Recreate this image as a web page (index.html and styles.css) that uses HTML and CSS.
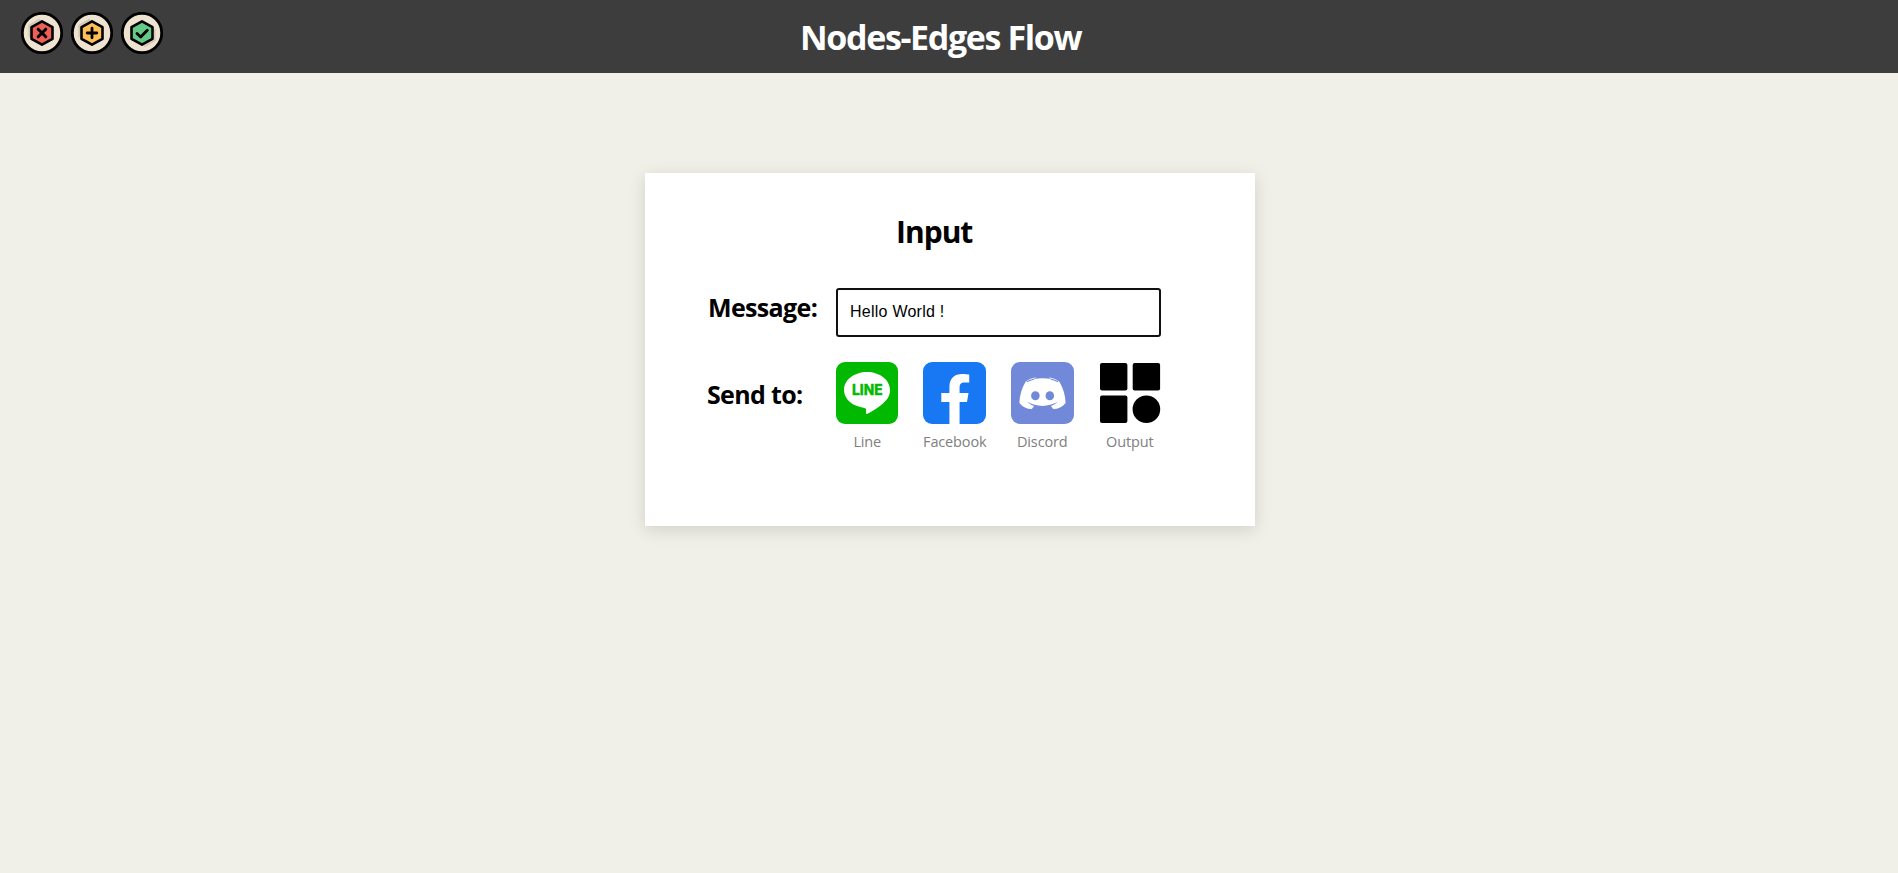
FILE: index.html
```html
<!DOCTYPE html>
<html lang="en">
<head>
<meta charset="utf-8">
<title>Nodes-Edges Flow</title>
<link rel="stylesheet" href="styles.css">
</head>
<body>
<header class="topbar">
  <div class="actions">
    <svg class="action" viewBox="0 0 42 42">
      <circle cx="21" cy="21" r="19.7" fill="#ede3d0" stroke="#000" stroke-width="2.8"/>
      <path d="M8.3 25V13.5L19 7.3" fill="none" stroke="#d5c9b4" stroke-width="2"/>
      <path d="M21 9.3L31.5 15.2V26.8L21 32.7L10.5 26.8V15.2Z" fill="#ee5f55" stroke="#000" stroke-width="2.6" stroke-linejoin="round"/>
      <path d="M17.200 17.200L24.800 24.800M24.800 17.200L17.200 24.800" stroke="#000" stroke-width="3" stroke-linecap="round"/>
    </svg>
    <svg class="action" viewBox="0 0 42 42">
      <circle cx="21" cy="21" r="19.7" fill="#ede3d0" stroke="#000" stroke-width="2.8"/>
      <path d="M8.3 25V13.5L19 7.3" fill="none" stroke="#d5c9b4" stroke-width="2"/>
      <path d="M21 9.3L31.5 15.2V26.8L21 32.7L10.5 26.8V15.2Z" fill="#fdbf57" stroke="#000" stroke-width="2.6" stroke-linejoin="round"/>
      <path d="M21 16.2V25.8M16.2 21H25.8" stroke="#000" stroke-width="2.8" stroke-linecap="round"/>
    </svg>
    <svg class="action" viewBox="0 0 42 42">
      <circle cx="21" cy="21" r="19.7" fill="#ede3d0" stroke="#000" stroke-width="2.8"/>
      <path d="M33.8 17V28.5L23 34.7" fill="none" stroke="#d5c9b4" stroke-width="1.5"/>
      <path d="M21 9.3L31.5 15.2V26.8L21 32.7L10.5 26.8V15.2Z" fill="#64c987" stroke="#000" stroke-width="2.6" stroke-linejoin="round"/>
      <path d="M16 21.5L19.7 25L26.3 18.2" fill="none" stroke="#000" stroke-width="2.8" stroke-linecap="round" stroke-linejoin="round"/>
    </svg>
  </div>
  <h1 class="title">Nodes-Edges Flow</h1>
</header>
<main class="card">
  <h2 class="card-title">Input</h2>
  <div class="row">
    <label class="label message-label" for="message">Message:</label>
    <input class="message" id="message" type="text" value="Hello World !">
  </div>
  <div class="row targets-row">
    <span class="label send-label">Send to:</span>
    <div class="targets">
      <div class="target">
        <svg class="logo" viewBox="0 0 62 62">
          <rect width="62" height="62" rx="9" fill="#00b900"/>
          <path d="M31 10C18.200 10 8 17.900 8 28C8 37.500 17 44.500 28.500 45.900C30.300 46.200 30.300 47.500 30 49.300C29.700 51.600 30 52.500 32 51.500C38 48.500 47 42.600 51.200 37C53 34.500 54 31.500 54 28C54 17.900 43.800 10 31 10Z" fill="#fff"/>
          <text class="line-word" x="16" y="33.300" textLength="30.500" lengthAdjust="spacingAndGlyphs">LINE</text>
        </svg>
        <span class="name">Line</span>
      </div>
      <div class="target">
        <svg class="logo logo-wide" viewBox="0 0 62 62" preserveAspectRatio="none">
          <rect width="62" height="62" rx="9" fill="#1877f2"/>
          <path d="M26 62V40H18V31H26V25C26 16 31 12 38.500 12C41.500 12 44 12.300 45.500 12.600V20.500H41C37 20.500 36 22.500 36 25.500V31H44.800L43.300 40H36V62Z" fill="#fff"/>
        </svg>
        <span class="name">Facebook</span>
      </div>
      <div class="target">
        <svg class="logo logo-wide" viewBox="0 0 62 62" preserveAspectRatio="none">
          <rect width="62" height="62" rx="9" fill="#7289da"/>
          <path d="M14.500 19.500C17.500 17.500 21 15.800 25 15.200L22.500 17.100C28 16 34 16 39.500 17.100L37 15.200C41 15.800 44.500 17.500 47.500 19.500C51.500 26.500 53.600 33.500 53.700 41C50.500 45 46.500 47.100 41.500 47.100L39.300 44C42 43 44.200 41.600 46 39.800C37 45.300 25 45.300 16 39.800C17.800 41.600 20 43 22.700 44L20.500 47.100C15.500 47.100 11.500 45 8.300 41C8.400 33.500 10.500 26.500 14.500 19.500Z" fill="#fff"/>
          <path d="M15.500 19.800C17.800 18.600 20 17.800 23 17.100M46.500 19.800C44.200 18.600 42 17.800 39 17.100" fill="none" stroke="#7289da" stroke-width="1"/>
          <ellipse cx="24" cy="33.800" rx="4.200" ry="4.500" fill="#7289da"/>
          <ellipse cx="38.200" cy="33.800" rx="4.200" ry="4.500" fill="#7289da"/>
        </svg>
        <span class="name">Discord</span>
      </div>
      <div class="target">
        <svg class="logo" viewBox="0 0 62 62">
          <rect x="1" y="1" width="27.400" height="27.400" rx="2"/>
          <rect x="33.700" y="1" width="27.400" height="27.400" rx="2"/>
          <rect x="1" y="33.600" width="27.400" height="27.400" rx="2"/>
          <circle cx="47.400" cy="47.300" r="13.800"/>
        </svg>
        <span class="name">Output</span>
      </div>
    </div>
  </div>
</main>
</body>
</html>
```
FILE: styles.css
```css
* { box-sizing: border-box; }
body {
  margin: 0;
  min-height: 100vh;
  background: #f0f0e8;
  font-family: "Open Sans", "Noto Sans", sans-serif;
  color: #000;
}
.topbar {
  height: 73px;
  background: #3d3d3d;
  display: grid;
  grid-template-columns: 800px auto 1fr;
}
.actions {
  display: flex;
  gap: 8px;
  padding: 12px 0 0 21px;
}
.action { width: 42px; height: 42px; display: block; }
.title {
  margin: 0;
  font-size: 34px;
  line-height: 74px;
  font-weight: 700;
  letter-spacing: -1.35px;
  color: #fff;
  white-space: nowrap;
}
.card {
  width: 610px;
  height: 353px;
  margin: 100px 0 0 645px;
  padding: 36px 94px 0 62px;
  background: #fff;
  box-shadow: 0 4px 16px rgba(0, 0, 0, 0.13);
}
.card-title {
  margin: 0 0 33px 189px;
  font-size: 30px;
  line-height: 46px;
  font-weight: 700;
  letter-spacing: -1px;
}
.row { display: flex; justify-content: space-between; }
.label {
  font-size: 25px;
  font-weight: 700;
  line-height: 38px;
  letter-spacing: -0.65px;
  white-space: nowrap;
}
.message-label { padding-left: 1px; }
.message {
  width: 325px;
  height: 49px;
  border: 2px solid #101010;
  border-radius: 3px;
  padding: 0 12px 2px;
  background: #fff;
  font: 16px "Liberation Sans", Arial, sans-serif;
  letter-spacing: 0.25px;
  color: #000;
}
.targets-row { margin-top: 25px; }
.send-label { padding-top: 13px; }
.targets { display: flex; gap: 25px; width: 325px; }
.target {
  width: 62.5px;
  display: flex;
  flex-direction: column;
  align-items: center;
}
.logo { width: 62px; height: 62px; display: block; }
.logo-wide { width: 63px; }
.name {
  margin-top: 8px;
  font-size: 14.5px;
  line-height: 20px;
  letter-spacing: -0.15px;
  color: #808080;
  white-space: nowrap;
}
.line-word {
  font: 700 15px Inter, sans-serif;
  fill: #00b900;
  stroke: #00b900;
  stroke-width: 0.6px;
  stroke-linejoin: round;
}
```
